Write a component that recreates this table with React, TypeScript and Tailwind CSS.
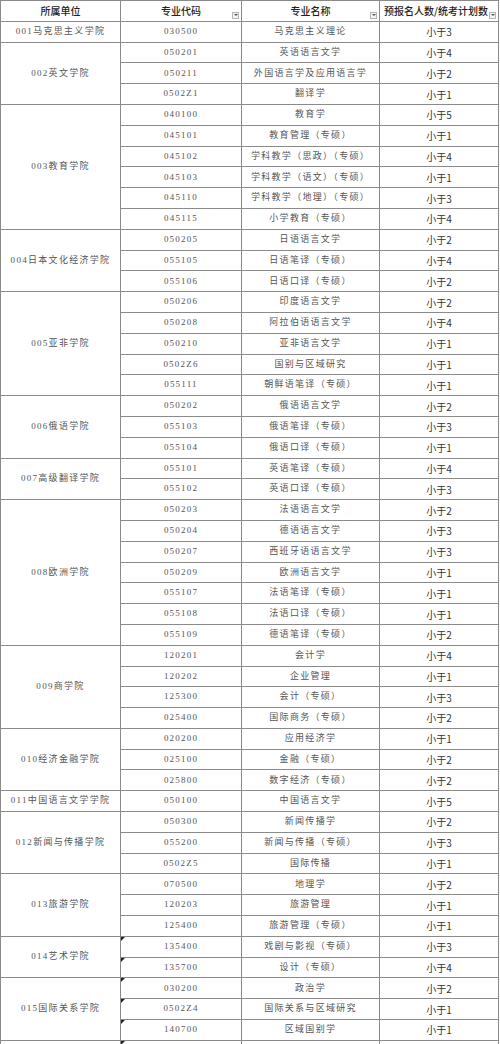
import React from 'react'

type Row = { code: string; name: string; num: string; mark?: boolean }
type Group = { unit: string; rows: Row[] }

const groups: Group[] = [
  { unit: '001马克思主义学院', rows: [{ code: '030500', name: '马克思主义理论', num: '小于3' }] },
  {
    unit: '002英文学院',
    rows: [
      { code: '050201', name: '英语语言文学', num: '小于4' },
      { code: '050211', name: '外国语言学及应用语言学', num: '小于2' },
      { code: '0502Z1', name: '翻译学', num: '小于1' },
    ],
  },
  {
    unit: '003教育学院',
    rows: [
      { code: '040100', name: '教育学', num: '小于5' },
      { code: '045101', name: '教育管理（专硕）', num: '小于1' },
      { code: '045102', name: '学科教学（思政）（专硕）', num: '小于4' },
      { code: '045103', name: '学科教学（语文）（专硕）', num: '小于1' },
      { code: '045110', name: '学科教学（地理）（专硕）', num: '小于3' },
      { code: '045115', name: '小学教育（专硕）', num: '小于4' },
    ],
  },
  {
    unit: '004日本文化经济学院',
    rows: [
      { code: '050205', name: '日语语言文学', num: '小于2' },
      { code: '055105', name: '日语笔译（专硕）', num: '小于4' },
      { code: '055106', name: '日语口译（专硕）', num: '小于2' },
    ],
  },
  {
    unit: '005亚非学院',
    rows: [
      { code: '050206', name: '印度语言文学', num: '小于2' },
      { code: '050208', name: '阿拉伯语语言文学', num: '小于4' },
      { code: '050210', name: '亚非语言文学', num: '小于1' },
      { code: '0502Z6', name: '国别与区域研究', num: '小于1' },
      { code: '055111', name: '朝鲜语笔译（专硕）', num: '小于1' },
    ],
  },
  {
    unit: '006俄语学院',
    rows: [
      { code: '050202', name: '俄语语言文学', num: '小于2' },
      { code: '055103', name: '俄语笔译（专硕）', num: '小于3' },
      { code: '055104', name: '俄语口译（专硕）', num: '小于1' },
    ],
  },
  {
    unit: '007高级翻译学院',
    rows: [
      { code: '055101', name: '英语笔译（专硕）', num: '小于4' },
      { code: '055102', name: '英语口译（专硕）', num: '小于3' },
    ],
  },
  {
    unit: '008欧洲学院',
    rows: [
      { code: '050203', name: '法语语言文学', num: '小于2' },
      { code: '050204', name: '德语语言文学', num: '小于3' },
      { code: '050207', name: '西班牙语语言文学', num: '小于3' },
      { code: '050209', name: '欧洲语言文学', num: '小于1' },
      { code: '055107', name: '法语笔译（专硕）', num: '小于1' },
      { code: '055108', name: '法语口译（专硕）', num: '小于1' },
      { code: '055109', name: '德语笔译（专硕）', num: '小于2' },
    ],
  },
  {
    unit: '009商学院',
    rows: [
      { code: '120201', name: '会计学', num: '小于4' },
      { code: '120202', name: '企业管理', num: '小于1' },
      { code: '125300', name: '会计（专硕）', num: '小于3' },
      { code: '025400', name: '国际商务（专硕）', num: '小于2' },
    ],
  },
  {
    unit: '010经济金融学院',
    rows: [
      { code: '020200', name: '应用经济学', num: '小于1' },
      { code: '025100', name: '金融（专硕）', num: '小于2' },
      { code: '025800', name: '数字经济（专硕）', num: '小于2' },
    ],
  },
  { unit: '011中国语言文学学院', rows: [{ code: '050100', name: '中国语言文学', num: '小于5' }] },
  {
    unit: '012新闻与传播学院',
    rows: [
      { code: '050300', name: '新闻传播学', num: '小于2' },
      { code: '055200', name: '新闻与传播（专硕）', num: '小于3' },
      { code: '0502Z5', name: '国际传播', num: '小于1' },
    ],
  },
  {
    unit: '013旅游学院',
    rows: [
      { code: '070500', name: '地理学', num: '小于2' },
      { code: '120203', name: '旅游管理', num: '小于1' },
      { code: '125400', name: '旅游管理（专硕）', num: '小于1' },
    ],
  },
  {
    unit: '014艺术学院',
    rows: [
      { code: '135400', name: '戏剧与影视（专硕）', num: '小于3', mark: true },
      { code: '135700', name: '设计（专硕）', num: '小于4', mark: true },
    ],
  },
  {
    unit: '015国际关系学院',
    rows: [
      { code: '030200', name: '政治学', num: '小于2', mark: true },
      { code: '0502Z4', name: '国际关系与区域研究', num: '小于1', mark: true },
      { code: '140700', name: '区域国别学', num: '小于1', mark: true },
    ],
  },
  { unit: '', rows: [{ code: '', name: '', num: '', mark: true }] },
]

const serif = "font-['Liberation_Serif','Noto_Sans_CJK_SC',serif]"
const sans = "font-['Noto_Sans_CJK_SC','Liberation_Sans',sans-serif]"

function FilterIcon() {
  return (
    <span className="absolute right-[2px] bottom-[2px] flex h-[7px] w-[7px] items-center justify-center border border-[#b5b5b5] bg-[#f4f4f4]">
      <span className="h-0 w-0 border-x-[2px] border-t-[2px] border-x-transparent border-t-[#555]" />
    </span>
  )
}

function Mark() {
  return (
    <span className="absolute left-0 top-0 h-0 w-0 border-t-[4px] border-r-[4px] border-t-[#222] border-r-transparent" />
  )
}

export default function App() {
  return (
    <div className="h-[1044px] w-[500px] overflow-hidden bg-white">
      <table className="w-[498px] table-fixed border-collapse text-center">
        <colgroup>
          <col className="w-[120px]" />
          <col className="w-[121px]" />
          <col className="w-[138px]" />
          <col className="w-[119px]" />
        </colgroup>
        <thead>
          <tr className={`h-[20.8px] text-[10px] font-medium text-[#222] ${sans}`}>
            <th className="border border-[#8a8a8a] p-0 font-medium">所属单位</th>
            <th className="relative border border-[#8a8a8a] p-0 font-medium">
              专业代码
              <FilterIcon />
            </th>
            <th className="relative border border-[#8a8a8a] p-0 font-medium">
              专业名称
              <FilterIcon />
            </th>
            <th className="relative border border-[#8a8a8a] p-0 pr-[6px] font-medium">
              预报名人数/统考计划数
              <FilterIcon />
            </th>
          </tr>
        </thead>
        <tbody>
          {groups.map((g) =>
            g.rows.map((r, i) => (
              <tr key={g.unit + r.code} className="h-[20.8px]">
                {i === 0 && (
                  <td
                    rowSpan={g.rows.length}
                    className={`border border-[#8a8a8a] p-0 text-[9px] tracking-[1.3px] text-[#555] ${serif}`}
                  >
                    {g.unit}
                  </td>
                )}
                <td className={`relative border border-[#8a8a8a] p-0 text-[9px] tracking-[1.2px] text-[#555] ${serif}`}>
                  {r.mark && <Mark />}
                  {r.code}
                </td>
                <td className={`border border-[#8a8a8a] p-0 text-[9px] tracking-[1.3px] text-[#555] ${serif}`}>
                  {r.name}
                </td>
                <td className={`border border-[#8a8a8a] p-0 text-[10px] text-[#333] ${sans}`}>{r.num}</td>
              </tr>
            ))
          )}
        </tbody>
      </table>
    </div>
  )
}
